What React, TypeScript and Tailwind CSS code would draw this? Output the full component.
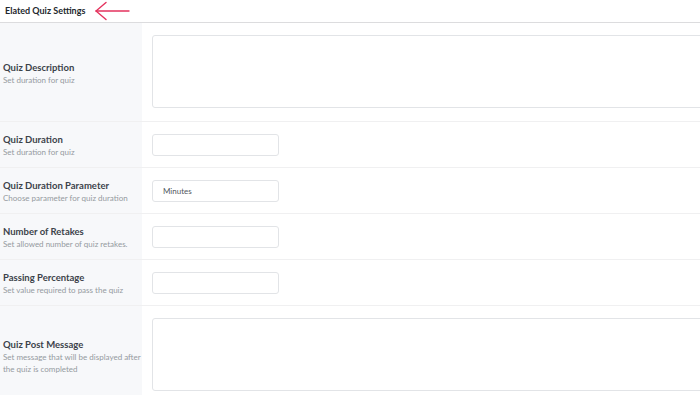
import React from "react";

type Row = { label: string; desc: string[]; kind: "textarea" | "input"; value?: string; h: string };

const rows: Row[] = [
  { label: "Quiz Description", desc: ["Set duration for quiz"], kind: "textarea", h: "h-[98px] pt-[4px]" },
  { label: "Quiz Duration", desc: ["Set duration for quiz"], kind: "input", h: "h-[45px] pt-[2px]" },
  { label: "Quiz Duration Parameter", desc: ["Choose parameter for quiz duration"], kind: "input", value: "Minutes", h: "h-[45px] pt-[2px]" },
  { label: "Number of Retakes", desc: ["Set allowed number of quiz retakes."], kind: "input", h: "h-[45px] pt-[2px]" },
  { label: "Passing Percentage", desc: ["Set value required to pass the quiz"], kind: "input", h: "h-[45px] pt-[2px]" },
  { label: "Quiz Post Message", desc: ["Set message that will be displayed after", "the quiz is completed"], kind: "textarea", h: "h-[102px]" },
];

export default function App() {
  return (
    <div className="w-[700px] h-[395px] overflow-hidden bg-white" style={{ fontFamily: 'Lato, "Noto Sans", sans-serif' }}>
      <div className="h-[23px] flex items-center border-b border-[#dcdcde] pl-[5px]">
        <span className="text-[9px] font-bold text-[#23282d]">Elated Quiz Settings</span>
        <svg width="36" height="20" viewBox="0 0 36 20" className="ml-[10px] mt-[-1px]" fill="none" stroke="#e4325d" strokeWidth="1.4" strokeLinecap="round">
          <line x1="1" y1="10" x2="34" y2="10" />
          <polyline points="11,1.5 1,10 11,18.5" />
        </svg>
      </div>
      {rows.map((r, i) => (
        <div key={i} className={`flex ${i < rows.length - 1 ? "border-b border-[#f0f0f1]" : ""}`}>
          <div className={`w-[142px] shrink-0 bg-[#f7f8fa] pl-[3px] flex flex-col justify-center ${r.h}`}>
            <div className="text-[9.5px] font-bold text-[#3c434a] leading-[12px]">{r.label}</div>
            {r.desc.map((d, j) => (
              <div key={j} className="text-[8px] text-[#959a9f] leading-[12px]">{d}</div>
            ))}
          </div>
          <div className="flex-1 pl-[10px] pt-[12px]">
            {r.kind === "textarea" ? (
              <div className="h-[73px] w-[600px] border border-[#e2e4e7] rounded-[3px] bg-white" />
            ) : (
              <div className="h-[22px] w-[127px] border border-[#e2e4e7] rounded-[3px] bg-white flex items-center pl-[10px] text-[8px] text-[#50575e]">
                {r.value ?? ""}
              </div>
            )}
          </div>
        </div>
      ))}
    </div>
  );
}
